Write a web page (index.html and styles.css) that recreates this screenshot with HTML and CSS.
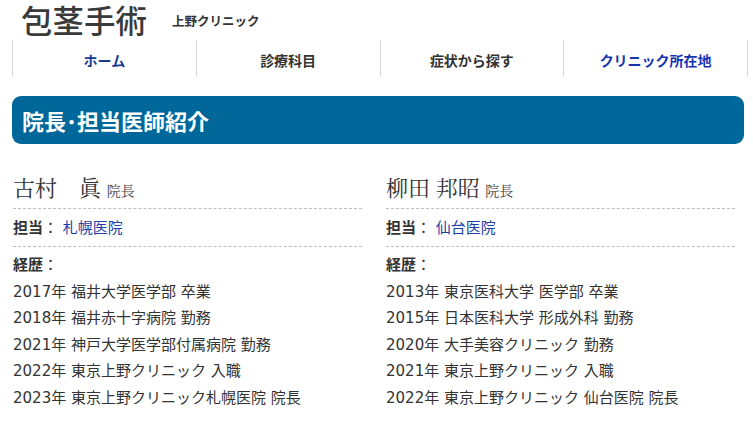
FILE: index.html
```html
<!DOCTYPE html>
<html lang="ja">
<head>
<meta charset="utf-8">
<title>院長・担当医師紹介 | 上野クリニック</title>
<link rel="stylesheet" href="styles.css">
</head>
<body>
<header class="site-header">
  <span class="logo">包茎手術</span>
  <span class="logo-sub">上野クリニック</span>
</header>

<nav class="gnav">
  <a class="gnav-item is-home" href="#">ホーム</a>
  <a class="gnav-item" href="#">診療科目</a>
  <a class="gnav-item" href="#">症状から探す</a>
  <a class="gnav-item is-link" href="#">クリニック所在地</a>
</nav>

<h1 class="section-title">院長･担当医師紹介</h1>

<div class="doctors">
  <section class="doctor">
    <h2 class="doctor-name">古村　眞 <small>院長</small></h2>
    <p class="doctor-clinic"><b>担当</b>： <a href="#">札幌医院</a></p>
    <div class="doctor-career">
      <p><b>経歴</b>：</p>
      <p>2017年 福井大学医学部 卒業</p>
      <p>2018年 福井赤十字病院 勤務</p>
      <p>2021年 神戸大学医学部付属病院 勤務</p>
      <p>2022年 東京上野クリニック 入職</p>
      <p>2023年 東京上野クリニック札幌医院 院長</p>
    </div>
  </section>

  <section class="doctor">
    <h2 class="doctor-name">柳田 邦昭 <small>院長</small></h2>
    <p class="doctor-clinic"><b>担当</b>： <a href="#">仙台医院</a></p>
    <div class="doctor-career">
      <p><b>経歴</b>：</p>
      <p>2013年 東京医科大学 医学部 卒業</p>
      <p>2015年 日本医科大学 形成外科 勤務</p>
      <p>2020年 大手美容クリニック 勤務</p>
      <p>2021年 東京上野クリニック 入職</p>
      <p>2022年 東京上野クリニック 仙台医院 院長</p>
    </div>
  </section>
</div>
</body>
</html>
```

FILE: styles.css
```css
* {
  box-sizing: border-box;
}

body {
  margin: 0;
  background: #fff;
  color: #333;
  font-family: "DejaVu Sans", "Noto Sans CJK JP", sans-serif;
}

a {
  text-decoration: none;
}

/* header */
.site-header {
  height: 40px;
  display: flex;
  align-items: center;
  padding-left: 21px;
}

.logo {
  font-family: "Noto Sans CJK JP", sans-serif;
  font-size: 31.5px;
  font-weight: 500;
  line-height: 38px;
  color: #3a3a3a;
  margin-top: -2px;
}

.logo-sub {
  font-family: "Noto Sans CJK JP", sans-serif;
  font-size: 12.5px;
  font-weight: 700;
  color: #333;
  margin-left: 25px;
  margin-top: 1px;
}

/* global navigation */
.gnav {
  display: grid;
  grid-template-columns: repeat(4, 1fr);
  margin: 0 5px 0 12px;
  height: 37px;
  border-right: 1px solid #d8d8d8;
}

.gnav-item {
  display: flex;
  align-items: center;
  justify-content: center;
  border-left: 1px solid #d8d8d8;
  font-family: "Noto Sans CJK JP", sans-serif;
  font-size: 14px;
  font-weight: 700;
  color: #333;
  padding-top: 2px;
}

.gnav-item.is-home {
  color: #1a3a96;
}

.gnav-item.is-link {
  color: #1533b0;
}

/* section heading */
.section-title {
  margin: 19px 9px 0 12px;
  height: 48px;
  padding-left: 10px;
  display: flex;
  align-items: center;
  background: #00679a;
  border-radius: 9px;
  color: #fff;
  font-family: "Noto Sans CJK JP", sans-serif;
  font-size: 22px;
  font-weight: 700;
}

/* doctor profiles */
.doctors {
  display: grid;
  grid-template-columns: 349px 349px;
  column-gap: 24px;
  margin: 28px 0 0 13px;
}

.doctor p {
  margin: 0;
}

.doctor-name {
  margin: 0;
  padding-bottom: 3px;
  line-height: 30px;
  border-bottom: 1px dashed #bdbdbd;
  font-family: "Noto Serif CJK JP", "Noto Sans CJK JP", serif;
  font-size: 22px;
  font-weight: 400;
  color: #333;
}

.doctor-name small {
  font-size: 14px;
  color: #444;
}

.doctor-clinic {
  padding: 5px 0;
  line-height: 26px;
  border-bottom: 1px dashed #bdbdbd;
  font-size: 15px;
}

.doctor-clinic a {
  color: #2040a8;
}

.doctor-career {
  padding-top: 4px;
  font-size: 15px;
  line-height: 26.5px;
}

.doctor b {
  font-family: "Noto Sans CJK JP", sans-serif;
  font-weight: 700;
}
```
